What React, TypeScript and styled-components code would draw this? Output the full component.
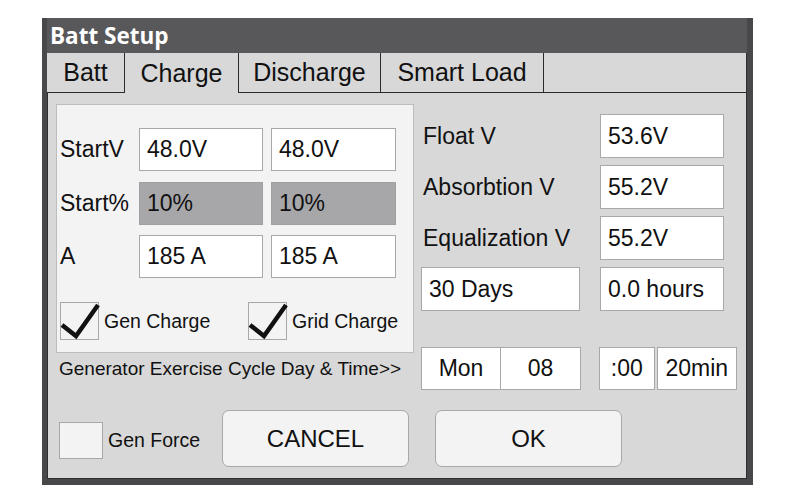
import React from 'react'
import styled, { createGlobalStyle } from 'styled-components'

const GlobalStyle = createGlobalStyle`
  html, body {
    margin: 0;
    padding: 0;
    background: #ffffff;
    font-family: "Liberation Sans", Arial, sans-serif;
    color: #111;
  }
  * { box-sizing: border-box; }
`

const Page = styled.div`
  padding: 18px 0 0 42px;
`

const Frame = styled.div`
  width: 711px;
  height: 467px;
  background: #58585a;
  border-style: solid;
  border-color: #48484a;
  border-width: 0 6px 6px 5px;
  display: flex;
  flex-direction: column;
`

const TitleBar = styled.div`
  height: 35px;
  display: flex;
  align-items: center;
  padding-left: 3px;
  font-family: "Open Sans", sans-serif;
  font-weight: 700;
  font-size: 22.5px;
  color: #ffffff;
`

const Body = styled.div`
  flex: 1;
  background: #d8d8d8;
  display: flex;
  flex-direction: column;
  box-shadow: inset 1px 0 0 #2e2e30, inset -1px 0 0 #2e2e30, inset 0 -1px 0 #2e2e30;
`

const TabBar = styled.div`
  display: flex;
  height: 40px;
`

const Tab = styled.div<{ $w: number; $active?: boolean }>`
  width: ${(p) => p.$w}px;
  display: flex;
  align-items: center;
  justify-content: center;
  font-size: 25px;
  background: #d8d8d8;
  border-right: 1px solid #2a2a2a;
  border-bottom: ${(p) => (p.$active ? 'none' : '1px solid #2a2a2a')};
`

const TabFill = styled.div`
  flex: 1;
  border-bottom: 1px solid #2a2a2a;
`

const Content = styled.div`
  flex: 1;
  padding: 11px 0 0 9px;
  display: flex;
  flex-direction: column;
`

const MainRow = styled.div`
  display: flex;
  gap: 7px;
`

const LeftCol = styled.div`
  width: 358px;
  display: flex;
  flex-direction: column;
`

const Panel = styled.div`
  height: 249px;
  background: #f4f3f4;
  border: 1px solid #bdbdbd;
  padding: 23px 0 0 3px;
  display: flex;
  flex-direction: column;
`

const FieldGrid = styled.div`
  display: grid;
  grid-template-columns: 71px 124px 125px;
  grid-auto-rows: 43px;
  column-gap: 8px;
  row-gap: 10.5px;
`

const Label = styled.div`
  display: flex;
  align-items: center;
  font-size: 23px;
  white-space: nowrap;
`

const Field = styled.div<{ $shade?: boolean; $center?: boolean; $w?: number }>`
  ${(p) => (p.$w ? `width: ${p.$w}px;` : '')}
  height: 100%;
  display: flex;
  align-items: center;
  justify-content: ${(p) => (p.$center ? 'center' : 'flex-start')};
  padding-left: ${(p) => (p.$center ? 0 : 7)}px;
  font-size: 23px;
  background: ${(p) => (p.$shade ? '#a7a7aa' : '#ffffff')};
  border: 1px solid ${(p) => (p.$shade ? '#a0a0a3' : '#a8a8a8')};
  white-space: nowrap;
`

const CheckRow = styled.div`
  display: flex;
  align-items: center;
  margin-top: 24px;
  height: 38px;
`

const CheckItem = styled.div<{ $w?: number; $drop?: number }>`
  display: flex;
  align-items: center;
  gap: 5px;
  ${(p) => (p.$w ? `width: ${p.$w}px;` : '')}
  ${(p) => (p.$drop ? `margin-top: ${p.$drop}px;` : '')}
`

const CheckBox = styled.div<{ $w: number; $h: number }>`
  width: ${(p) => p.$w}px;
  height: ${(p) => p.$h}px;
  background: #f4f3f4;
  border: 1px solid #a8a8a8;
  position: relative;
  flex-shrink: 0;
`

const CheckMark = styled.svg`
  position: absolute;
  left: -1px;
  top: -1px;
`

const SmallText = styled.span`
  font-size: 19.5px;
`

const GenNote = styled.div`
  margin-top: 5px;
  padding-left: 3px;
  height: 22px;
  line-height: 22px;
  font-size: 19px;
  white-space: nowrap;
`

const RightCol = styled.div`
  width: 316px;
  padding-top: 10px;
  display: flex;
  flex-direction: column;
  gap: 7px;
`

const SetRow = styled.div`
  display: flex;
  height: 44px;
`

const SetLabel = styled.div`
  width: 179px;
  padding-left: 2px;
  display: flex;
  align-items: center;
  font-size: 23px;
  white-space: nowrap;
`

const TimeRow = styled.div`
  display: flex;
  height: 43px;
  margin-top: 29px;
`

const Joined = styled.div`
  display: flex;
  & > * + * { border-left: none; }
`

const BottomRow = styled.div`
  display: flex;
  align-items: center;
  margin-top: 20px;
  padding-left: 3px;
`

const Button = styled.button`
  width: 187px;
  height: 57px;
  background: #f4f3f4;
  border: 1px solid #a8a8a8;
  border-radius: 7px;
  font-family: "Liberation Sans", Arial, sans-serif;
  font-size: 24px;
  color: #111;
  padding: 0;
`

const Spacer = styled.div<{ $w: number }>`
  width: ${(p) => p.$w}px;
  flex-shrink: 0;
`

function Tick() {
  return (
    <CheckMark width="40" height="39" viewBox="0 0 40 39">
      <polyline
        points="2,23 16,34 38,3"
        fill="none"
        stroke="#111"
        strokeWidth="4.5"
        strokeLinejoin="miter"
      />
    </CheckMark>
  )
}

export default function App() {
  return (
    <>
      <GlobalStyle />
      <Page>
        <Frame>
          <TitleBar>Batt Setup</TitleBar>
          <Body>
            <TabBar>
              <Tab $w={78}>Batt</Tab>
              <Tab $w={114} $active>
                Charge
              </Tab>
              <Tab $w={142}>Discharge</Tab>
              <Tab $w={163}>Smart Load</Tab>
              <TabFill />
            </TabBar>
            <Content>
              <MainRow>
                <LeftCol>
                  <Panel>
                    <FieldGrid>
                      <Label>StartV</Label>
                      <Field>48.0V</Field>
                      <Field>48.0V</Field>
                      <Label>Start%</Label>
                      <Field $shade>10%</Field>
                      <Field $shade>10%</Field>
                      <Label>A</Label>
                      <Field>185 A</Field>
                      <Field>185 A</Field>
                    </FieldGrid>
                    <CheckRow>
                      <CheckItem $w={188}>
                        <CheckBox $w={39} $h={38}>
                          <Tick />
                        </CheckBox>
                        <SmallText>Gen Charge</SmallText>
                      </CheckItem>
                      <CheckItem>
                        <CheckBox $w={39} $h={38}>
                          <Tick />
                        </CheckBox>
                        <SmallText>Grid Charge</SmallText>
                      </CheckItem>
                    </CheckRow>
                  </Panel>
                  <GenNote>Generator Exercise Cycle Day &amp; Time&gt;&gt;</GenNote>
                </LeftCol>
                <RightCol>
                  <SetRow>
                    <SetLabel>Float V</SetLabel>
                    <Field $w={124}>53.6V</Field>
                  </SetRow>
                  <SetRow>
                    <SetLabel>Absorbtion V</SetLabel>
                    <Field $w={124}>55.2V</Field>
                  </SetRow>
                  <SetRow>
                    <SetLabel>Equalization V</SetLabel>
                    <Field $w={124}>55.2V</Field>
                  </SetRow>
                  <SetRow>
                    <Field $w={159}>30 Days</Field>
                    <Spacer $w={20} />
                    <Field $w={124}>0.0 hours</Field>
                  </SetRow>
                  <TimeRow>
                    <Joined>
                      <Field $w={80} $center>
                        Mon
                      </Field>
                      <Field $w={80} $center>
                        08
                      </Field>
                    </Joined>
                    <Spacer $w={18} />
                    <Field $w={56} $center>
                      :00
                    </Field>
                    <Spacer $w={2} />
                    <Field $w={81} $center>
                      20min
                    </Field>
                  </TimeRow>
                </RightCol>
              </MainRow>
              <BottomRow>
                <CheckItem $w={163} $drop={4}>
                  <CheckBox $w={44} $h={37} />
                  <SmallText>Gen Force</SmallText>
                </CheckItem>
                <Button>CANCEL</Button>
                <Spacer $w={26} />
                <Button>OK</Button>
              </BottomRow>
            </Content>
          </Body>
        </Frame>
      </Page>
    </>
  )
}
